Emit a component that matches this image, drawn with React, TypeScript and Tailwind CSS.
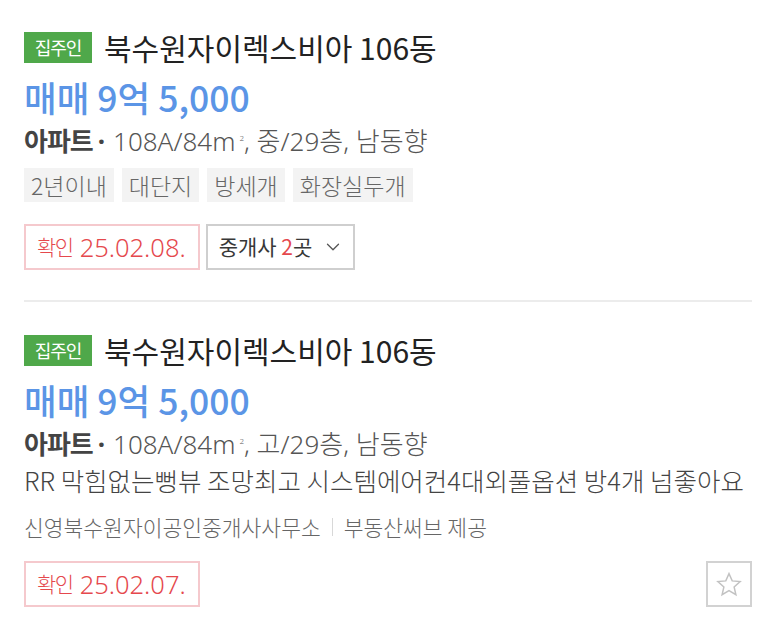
import { ChevronDown } from 'lucide-react';

type Listing = {
  title: string;
  price: string;
  size: string;
  floor: string;
  tags?: string[];
  desc?: string;
  agency?: string;
  provider?: string;
  confirmed: string;
  agents?: number;
  star?: boolean;
};

const listings: Listing[] = [
  {
    title: '북수원자이렉스비아 106동',
    price: '매매 9억 5,000',
    size: '108A/84m',
    floor: ', 중/29층, 남동향',
    tags: ['2년이내', '대단지', '방세개', '화장실두개'],
    confirmed: '25.02.08.',
    agents: 2,
  },
  {
    title: '북수원자이렉스비아 106동',
    price: '매매 9억 5,000',
    size: '108A/84m',
    floor: ', 고/29층, 남동향',
    desc: 'RR 막힘없는뻥뷰 조망최고 시스템에어컨4대외풀옵션 방4개 넘좋아요',
    agency: '신영북수원자이공인중개사사무소',
    provider: '부동산써브 제공',
    confirmed: '25.02.07.',
    star: true,
  },
];

function StarIcon() {
  return (
    <svg width="28" height="27" viewBox="0 0 24 24" fill="none" stroke="#c2c2c2" strokeWidth="1.3" strokeLinejoin="miter">
      <path d="M12 2.3l2.85 6.5 7.05.65-5.35 4.7 1.6 6.95L12 17.45 5.85 21.1l1.6-6.95-5.35-4.7 7.05-.65z" />
    </svg>
  );
}

function ListingItem({ item }: { item: Listing }) {
  return (
    <div>
      {/* Title */}
      <div className="flex items-center h-[34px]">
        <span className="w-[68px] h-[31px] bg-[#4fa84a] text-white text-[18px] leading-[31px] text-center tracking-[-1px]">
          집주인
        </span>
        <h2 className="ml-[12px] text-[30px] leading-[34px] text-[#222]">{item.title}</h2>
      </div>
      <p className="mt-[13px] text-[35.5px] leading-[40px] font-medium text-[#5b95e6]">{item.price}</p>

      {/* Spec */}
      <p className="mt-[8px] text-[26px] leading-[32px] text-[#555] font-light font-['Noto_Sans','Noto_Sans_CJK_KR',sans-serif]">
        <span className="font-bold text-[#444] tracking-[-1px]">아파트</span>
        <span className="font-bold text-[#444] ml-[5px] mr-[8px]">·</span>
        {item.size}
        <sup className="text-[8px] ml-[4px] -top-[10px]">2</sup>
        {item.floor}
      </p>

      {item.tags && (
        <div className="mt-[11px] flex gap-[8px]">
          {item.tags.map((t) => (
            <span key={t} className="bg-[#f3f3f3] text-[#666] text-[23px] leading-[34px] px-[7px] font-light">
              {t}
            </span>
          ))}
        </div>
      )}

      {item.desc && (
        <p className="mt-[3px] text-[25.5px] leading-[34px] text-[#444] font-light">{item.desc}</p>
      )}

      {item.agency && (
        <p className="mt-[16px] flex items-center text-[21.5px] leading-[28px] text-[#666] font-light">
          {item.agency}
          <span className="mx-[11px] w-px h-[18px] bg-[#d8d8d8]" />
          {item.provider}
        </p>
      )}

      {/* Bottom row */}
      <div className={`${item.tags ? 'mt-[22px]' : 'mt-[20px]'} flex items-center justify-between`}>
        <div className="flex gap-[6px]">
          <span className="h-[46px] border-2 border-[#f5c9cd] text-[#e5484d] pl-[11px] pr-[12px] flex items-center font-light">
            <span className="text-[21px] tracking-[-1.5px]">확인</span>
            <span className="ml-[7px] text-[25.5px] font-['Noto_Sans',sans-serif]">{item.confirmed}</span>
          </span>
          {item.agents && (
            <button className="h-[46px] border-2 border-[#cfcfcf] text-[#383838] text-[21px] pl-[11px] pr-[9px] flex items-center gap-[10px]">
              <span>
                중개사 <span className="text-[#e5484d]">{item.agents}</span>곳
              </span>
              <ChevronDown size={22} strokeWidth={1.4} className="text-[#555]" />
            </button>
          )}
        </div>
        {item.star && (
          <button className="w-[46px] h-[46px] border-2 border-[#d2d2d2] flex items-center justify-center">
            <StarIcon />
          </button>
        )}
      </div>
    </div>
  );
}

export default function App() {
  return (
    <div
      className="bg-white w-[772px] h-[628px] overflow-hidden pl-[24px] pr-[20px]"
      style={{ fontFamily: '"Noto Sans CJK KR", "Noto Sans", sans-serif' }}
    >
      <div className="pt-[30px] pb-[30px]">
        <ListingItem item={listings[0]} />
      </div>
      <div className="h-[2px] bg-[#ececec]" />
      <div className="pt-[31px]">
        <ListingItem item={listings[1]} />
      </div>
    </div>
  );
}
